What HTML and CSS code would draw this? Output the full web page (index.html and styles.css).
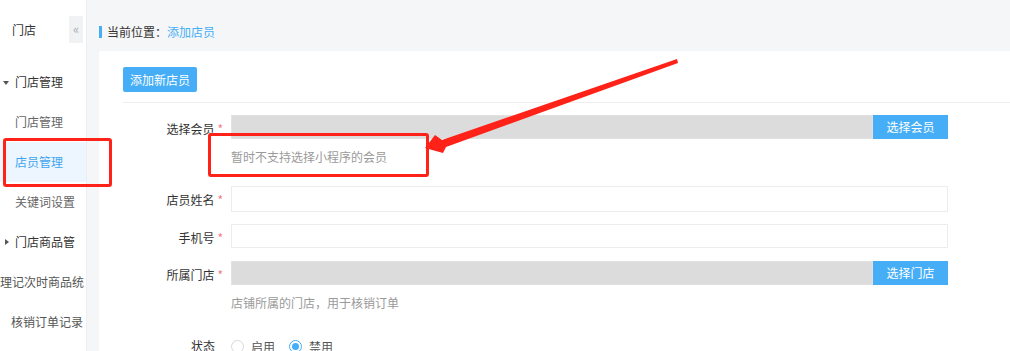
FILE: index.html
```html
<!DOCTYPE html>
<html>
<head>
  <title>添加店员</title>
  <link rel="stylesheet" href="styles.css">
</head>
<body>
  <div class="layout">
    <div class="sidebar">
      <div class="side-head">
        <span class="side-title">门店</span>
        <span class="collapse-btn">&laquo;</span>
      </div>
      <div class="side-item group"><span class="caret down"></span>门店管理</div>
      <div class="side-item sub">门店管理</div>
      <div class="side-item sub active">店员管理</div>
      <div class="side-item sub">关键词设置</div>
      <div class="side-item group"><span class="caret right"></span>门店商品管</div>
      <div class="side-item sub end">理记次时商品统</div>
      <div class="side-item sub end">核销订单记录</div>
    </div>

    <div class="main">
      <div class="breadcrumb">当前位置：<span class="crumb-link">添加店员</span></div>

      <div class="panel">
        <div class="toolbar">
          <button class="btn-primary">添加新店员</button>
        </div>

        <div class="form">
          <div class="form-row">
            <label class="form-label">选择会员<i>*</i></label>
            <div class="form-control">
              <div class="input-group">
                <div class="input disabled"></div>
                <button class="btn-addon">选择会员</button>
              </div>
              <div class="hint">暂时不支持选择小程序的会员</div>
            </div>
          </div>

          <div class="form-row">
            <label class="form-label">店员姓名<i>*</i></label>
            <div class="form-control">
              <div class="input tall"></div>
            </div>
          </div>

          <div class="form-row gap-more">
            <label class="form-label">手机号<i>*</i></label>
            <div class="form-control">
              <div class="input"></div>
            </div>
          </div>

          <div class="form-row">
            <label class="form-label">所属门店<i>*</i></label>
            <div class="form-control">
              <div class="input-group">
                <div class="input disabled"></div>
                <button class="btn-addon">选择门店</button>
              </div>
              <div class="hint">店铺所属的门店，用于核销订单</div>
            </div>
          </div>

          <div class="form-row status-row">
            <label class="form-label plain">状态</label>
            <div class="form-control radios">
              <span class="radio"></span><span class="radio-text">启用</span>
              <span class="radio checked"></span><span class="radio-text">禁用</span>
            </div>
          </div>
        </div>
      </div>
    </div>
  </div>

  <!-- annotation marks drawn over the screenshot -->
  <div class="mark mark-menu"></div>
  <div class="mark mark-hint"></div>
  <svg class="arrow" width="1010" height="351" viewBox="0 0 1010 351">
    <polygon points="677,59 678,63 446,147 443,153 425,148 435,135 442,140" fill="#ff2218"/>
  </svg>
</body>
</html>
```

FILE: styles.css
```css
body {
  margin: 0;
  font-family: "Noto Sans CJK SC", "Liberation Sans", sans-serif;
  font-size: 12px;
  color: #333;
  background: #f5f6f8;
  overflow: hidden;
}

.layout {
  display: flex;
  height: 351px;
}

.sidebar {
  width: 86px;
  flex-shrink: 0;
  background: #fff;
  border-right: 1px solid #eceef1;
  overflow: hidden;
}

.side-head {
  height: 62px;
  display: flex;
  align-items: flex-start;
  justify-content: space-between;
  padding-top: 16px;
  box-sizing: border-box;
}

.side-title {
  margin-left: 12px;
  line-height: 27px;
  font-size: 12px;
  color: #333;
}

.collapse-btn {
  width: 14px;
  height: 27px;
  margin-right: 3px;
  background: #f1f2f4;
  color: #a9aeb6;
  font-size: 13px;
  line-height: 25px;
  text-align: center;
}

.side-item {
  height: 40px;
  line-height: 40px;
  padding-left: 15px;
  white-space: nowrap;
  color: #666;
  position: relative;
}

.side-item.group {
  color: #333;
}

.side-item.active {
  background: #edf5fe;
  color: #3ea6f0;
}

.side-item.end {
  padding-left: 0;
  padding-right: 3px;
  text-align: right;
  color: #555;
}

.caret {
  position: absolute;
  width: 0;
  height: 0;
}

.caret.down {
  left: 3px;
  top: 19px;
  border-left: 3px solid transparent;
  border-right: 3px solid transparent;
  border-top: 4px solid #555;
}

.caret.right {
  left: 5px;
  top: 17px;
  border-top: 3px solid transparent;
  border-bottom: 3px solid transparent;
  border-left: 4px solid #555;
}

.main {
  flex: 1;
  padding-left: 12px;
  display: flex;
  flex-direction: column;
}

.breadcrumb {
  margin-top: 26px;
  height: 12px;
  line-height: 12px;
  border-left: 3px solid #45aef5;
  padding-left: 5px;
  color: #333;
}

.crumb-link {
  color: #45aef5;
}

.panel {
  margin-top: 13px;
  flex: 1;
  background: #fff;
  padding: 16px 0 0 24px;
}

.toolbar {
  padding-bottom: 10px;
  border-bottom: 1px solid #eeeeee;
}

.btn-primary {
  height: 25px;
  padding: 0 7px;
  border: none;
  border-radius: 2px;
  background: #46aef6;
  color: #fff;
  font-family: inherit;
  font-size: 12px;
  line-height: 25px;
}

.form {
  padding-top: 12px;
}

.form-row {
  display: flex;
  margin-bottom: 12px;
}

.form-row.gap-more {
  margin-bottom: 13px;
}

.form-label {
  width: 100px;
  flex-shrink: 0;
  text-align: right;
  line-height: 24px;
  position: relative;
  top: 2px;
  color: #333;
  box-sizing: border-box;
}

.form-label.plain {
  padding-right: 8px;
}

.form-label i {
  font-style: normal;
  color: #f27b88;
  margin-left: 3px;
}

.form-control {
  margin-left: 8px;
  width: 717px;
}

.input-group {
  display: flex;
}

.input {
  height: 24px;
  box-sizing: border-box;
  border: 1px solid #ececec;
  background: #fff;
  flex: 1;
}

.input.tall {
  height: 26px;
}

.input.disabled {
  background: #dcdcdc;
  border-color: #e2e2e2;
}

.btn-addon {
  width: 75px;
  height: 24px;
  border: none;
  background: #46aef6;
  color: #fff;
  font-family: inherit;
  font-size: 12px;
  line-height: 24px;
  padding: 0;
}

.hint {
  margin: 9px 0 8px;
  line-height: 18px;
  color: #9a9a9a;
}

.status-row {
  margin-top: 2px;
}

.radios {
  display: flex;
  align-items: center;
  height: 24px;
  position: relative;
  top: 2px;
}

.radio {
  width: 11px;
  height: 11px;
  border: 1px solid #d8d8d8;
  border-radius: 50%;
  position: relative;
}

.radio.checked {
  border-color: #46aef6;
}

.radio.checked::after {
  content: "";
  position: absolute;
  left: 2px;
  top: 2px;
  width: 7px;
  height: 7px;
  border-radius: 50%;
  background: #46aef6;
}

.radio-text {
  margin-left: 7px;
  margin-right: 14px;
  color: #555;
}

.mark {
  position: absolute;
  border: 3px solid #ff2218;
  border-radius: 3px;
  box-sizing: border-box;
}

.mark-menu {
  left: 3px;
  top: 138px;
  width: 109px;
  height: 49px;
}

.mark-hint {
  left: 208px;
  top: 133px;
  width: 221px;
  height: 44px;
}

.arrow {
  position: absolute;
  left: 0;
  top: 0;
  pointer-events: none;
}
```
